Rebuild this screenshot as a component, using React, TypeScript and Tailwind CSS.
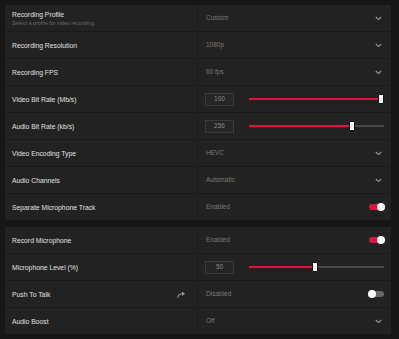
import React from 'react';

type Row =
  | { label: string; sub?: string; kind: 'select'; value: string }
  | { label: string; kind: 'slider'; value: number; pct: number }
  | { label: string; kind: 'toggle'; value: string; on: boolean; icon?: boolean };

const videoRows: Row[] = [
  { label: 'Recording Profile', sub: 'Select a profile for video recording.', kind: 'select', value: 'Custom' },
  { label: 'Recording Resolution', kind: 'select', value: '1080p' },
  { label: 'Recording FPS', kind: 'select', value: '60 fps' },
  { label: 'Video Bit Rate (Mb/s)', kind: 'slider', value: 100, pct: 100 },
  { label: 'Audio Bit Rate (kb/s)', kind: 'slider', value: 256, pct: 76 },
  { label: 'Video Encoding Type', kind: 'select', value: 'HEVC' },
  { label: 'Audio Channels', kind: 'select', value: 'Automatic' },
  { label: 'Separate Microphone Track', kind: 'toggle', value: 'Enabled', on: true },
];

const micRows: Row[] = [
  { label: 'Record Microphone', kind: 'toggle', value: 'Enabled', on: true },
  { label: 'Microphone Level (%)', kind: 'slider', value: 50, pct: 49 },
  { label: 'Push To Talk', kind: 'toggle', value: 'Disabled', on: false, icon: true },
  { label: 'Audio Boost', kind: 'select', value: 'Off' },
];

const Chevron = () => (
  <svg width="7" height="5" viewBox="0 0 7 5" className="mr-[9px]">
    <path d="M0.8 1 L3.5 3.6 L6.2 1" fill="none" stroke="#9a9a9a" strokeWidth="1.1" />
  </svg>
);

const ShareArrow = () => (
  <svg width="9" height="7" viewBox="0 0 9 7" className="mr-[11px]">
    <path d="M0.6 6.6 C1.2 4 3.2 2.8 6 2.8" fill="none" stroke="#9a9a9a" strokeWidth="1.1" />
    <path d="M5 0.6 L8 2.8 L5 5 Z" fill="#9a9a9a" />
  </svg>
);

const Toggle = ({ on }: { on: boolean }) => (
  <div
    className={`relative mr-[7px] h-[6px] w-[15px] rounded-full ${on ? 'bg-[#e0123e]' : 'bg-[#666666]'}`}
  >
    <div
      className={`absolute top-[-1px] h-[8px] w-[8px] rounded-full bg-white ${on ? 'right-[-1px]' : 'left-[-1px]'}`}
    />
  </div>
);

const Slider = ({ value, pct }: { value: number; pct: number }) => (
  <div className="ml-[-1px] flex flex-1 items-center">
    <div className="flex h-[13px] w-[29px] items-center justify-center border border-[#3b3b3b] bg-[#252525] text-[6.5px] text-[#8a8a8a]">
      {value}
    </div>
    <div className="relative ml-[15px] mr-[7px] h-[2px] flex-1 bg-[#474747]">
      <div className="absolute left-0 top-0 h-[2px] bg-[#e0123e]" style={{ width: `${pct}%` }} />
      <div
        className="absolute top-[-4px] h-[10px] w-[6px] -translate-x-1/2 rounded-[1px] border border-[#111] bg-white"
        style={{ left: `calc(${pct}% - ${pct === 100 ? 3 : 0}px)` }}
      />
    </div>
  </div>
);

const SettingRow = ({ row }: { row: Row }) => (
  <div className="grid h-[26px] grid-cols-[192px_1fr]">
    <div className="flex items-center pl-[7px]">
      <div className="flex flex-1 flex-col justify-center">
        <span className="text-[6.8px] leading-[9px] text-[#e0e0e0]">{row.label}</span>
        {row.kind === 'select' && row.sub && (
          <span className="mt-px text-[5.4px] leading-[7px] text-[#6a6a6a]">{row.sub}</span>
        )}
      </div>
      {row.kind === 'toggle' && row.icon && <ShareArrow />}
    </div>
    <div className="flex items-center border-l border-[#1c1c1c] pl-[8px]">
      {row.kind === 'slider' ? (
        <Slider value={row.value} pct={row.pct} />
      ) : (
        <>
          <span className="flex-1 text-[6.5px] text-[#7a7a7a]">{row.value}</span>
          {row.kind === 'select' ? <Chevron /> : <Toggle on={row.on} />}
        </>
      )}
    </div>
  </div>
);

const Panel = ({ rows }: { rows: Row[] }) => (
  <div className="flex flex-col gap-px bg-[#1a1a1a]">
    {rows.map((r) => (
      <div key={r.label} className="bg-[#222222]">
        <SettingRow row={r} />
      </div>
    ))}
  </div>
);

export default function App() {
  return (
    <div
      className="h-[339px] w-[399px] overflow-hidden bg-[#161616] pl-[5px] pr-[8px] pt-[5px]"
      style={{ fontFamily: '"Liberation Sans", Arial, sans-serif' }}
    >
      <div className="flex flex-col gap-[7px]">
        <Panel rows={videoRows} />
        <Panel rows={micRows} />
      </div>
    </div>
  );
}
